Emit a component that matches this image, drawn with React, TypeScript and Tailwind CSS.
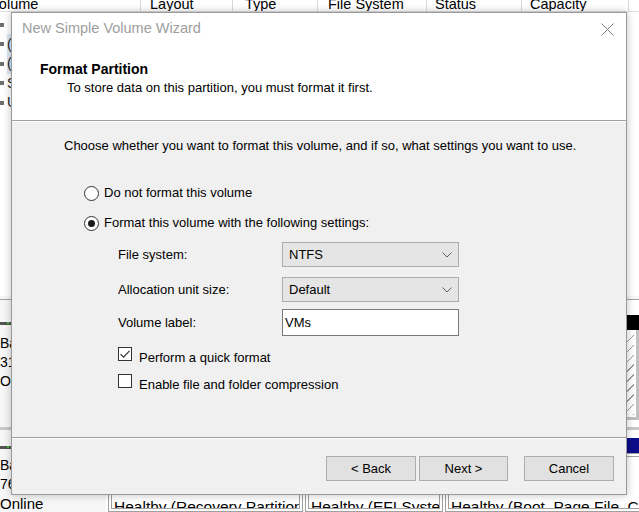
import React from 'react';

const columns = [
  { label: 'Volume', w: 'w-[141px]', pad: 'pl-0 -ml-[10px]' },
  { label: 'Layout', w: 'w-[92px]', pad: 'pl-[9px]' },
  { label: 'Type', w: 'w-[85px]', pad: 'pl-[12px]' },
  { label: 'File System', w: 'w-[109px]', pad: 'pl-[10px]' },
  { label: 'Status', w: 'w-[95px]', pad: 'pl-[8px]' },
  { label: 'Capacity', w: 'w-[107px]', pad: 'pl-[8px]' },
];

const volumes = [
  { name: '', tint: false },
  { name: '(C:)', tint: true },
  { name: '(E:)', tint: true },
  { name: 'System Reserved', tint: false },
  { name: 'USB (F:)', tint: false },
];

const Radio: React.FC<{ checked?: boolean; label: string }> = ({ checked, label }) => (
  <div className="flex items-center h-[18px]">
    <span className="w-[15px] h-[15px] rounded-full border border-[#333] bg-white flex items-center justify-center">
      {checked && <span className="w-[7px] h-[7px] rounded-full bg-[#1a1a1a]" />}
    </span>
    <span className="ml-[5px]">{label}</span>
  </div>
);

const Checkbox: React.FC<{ checked?: boolean; label: string }> = ({ checked, label }) => (
  <div className="flex items-center h-[18px]">
    <span className="w-[14px] h-[14px] border border-[#333] bg-white flex items-center justify-center">
      {checked && (
        <svg width="12" height="12" viewBox="0 0 12 12">
          <path d="M1.5 6.2 L4.5 9.2 L10.5 2.8" fill="none" stroke="#333" strokeWidth="1.2" />
        </svg>
      )}
    </span>
    <span className="ml-[7px] mt-[7px]">{label}</span>
  </div>
);

const Chevron = () => (
  <svg width="10" height="6" viewBox="0 0 10 6">
    <path d="M0.5 0.5 L5 5 L9.5 0.5" fill="none" stroke="#606060" strokeWidth="1" />
  </svg>
);

const Select: React.FC<{ value: string }> = ({ value }) => (
  <div className="w-[177px] h-[25px] bg-[#e5e5e5] border border-[#adadad] flex items-center justify-between pl-[6px] pr-[6px]">
    <span>{value}</span>
    <Chevron />
  </div>
);

const FormRow: React.FC<{ label: string; children: React.ReactNode; className?: string }> = ({ label, children, className }) => (
  <div className={`flex items-center ${className ?? ''}`}>
    <span className="w-[164px]">{label}</span>
    {children}
  </div>
);

const Button: React.FC<{ label: string; className?: string }> = ({ label, className }) => (
  <button className={`h-[25px] bg-[#e1e1e1] border border-[#adadad] text-[13px] text-black ${className ?? ''}`}>
    {label}
  </button>
);

const DiskIcon = () => (
  <div className="w-[11px] h-[3px] bg-[#555] flex justify-end pr-[2px]">
    <span className="w-[2px] h-[2px] bg-[#3cc23c]" />
  </div>
);

const Partition: React.FC<{ label: string; className: string }> = ({ label, className }) => (
  <div className={`flex flex-col ${className}`}>
    <div className="h-[15px] shrink-0 bg-[#0c0c8a]" />
    <div className="flex-1 min-h-0 border border-[#a0a0a0] p-[2px] bg-white">
      <div className="h-full border border-[#a0a0a0] bg-white pl-[2px] pt-[41px] text-[15.5px] leading-[18px] whitespace-nowrap overflow-hidden">
        {label}
      </div>
    </div>
  </div>
);

export default function App() {
  return (
    <div className="relative w-[639px] h-[512px] overflow-hidden bg-white font-['Liberation_Sans',Arial,sans-serif] text-black">
      {/* column header of the volume list */}
      <div className="flex h-[12px] border-b border-[#e0e0e0] overflow-hidden text-[14.5px] leading-[14px]">
        {columns.map((c) => (
          <div key={c.label} className={`${c.w} shrink-0 border-r border-[#d8d8d8] overflow-hidden`}>
            <div className={`-mt-[3px] whitespace-nowrap ${c.pad}`}>{c.label}</div>
          </div>
        ))}
        <div className="flex-1" />
      </div>

      {/* volume list */}
      <div className="h-[284px] pt-[3px]">
        {volumes.map((v, i) => (
          <div key={i} className="h-[19.5px] flex items-center text-[14px]">
            <span className="w-[4px] h-[4px] bg-[#6e6e6e]" />
            <span className={`ml-[3px] whitespace-nowrap text-[#1b1b1b] ${v.tint ? 'bg-[#dce9f5]' : ''}`}>{v.name}</span>
          </div>
        ))}
      </div>

      <div className="h-[4px] border-b border-[#a0a0a0] bg-[#f7f7f7]" />

      {/* disk 0 */}
      <div className="flex h-[130px] border-b-[3px] border-[#c8c8c8] text-[14px]">
        <div className="w-[106px] shrink-0 bg-[#f7f7f7] pt-[22px]">
          <DiskIcon />
          <div className="pt-[9px] leading-[19px] whitespace-nowrap">
            <div>Basic</div>
            <div>31.98 GB</div>
            <div>Online</div>
          </div>
        </div>
        <div className="flex-1 ml-[2px] pt-[15px] pb-[7px] flex flex-col">
          <div className="h-[15px] shrink-0 bg-black" />
          <div className="flex-1 border-x-[3px] border-b-[3px] border-[#c0c0c0] p-[2px] bg-white">
            <div className="h-full bg-[repeating-linear-gradient(135deg,#ffffff_0px,#ffffff_6px,#9a9a9a_6px,#9a9a9a_7px)]" />
          </div>
        </div>
      </div>

      {/* disk 1 */}
      <div className="flex h-[82px] overflow-hidden text-[14px]">
        <div className="w-[106px] shrink-0 bg-[#f7f7f7] pt-[16px]">
          <DiskIcon />
          <div className="pt-[7px] leading-[19px] whitespace-nowrap">
            <div>Basic</div>
            <div>76.69 GB</div>
            <div className="text-[15px]">Online</div>
          </div>
        </div>
        <div className="flex-1 flex gap-[2px] ml-[2px] pt-[8px]">
          <Partition label="Healthy (Recovery Partition)" className="w-[195px]" />
          <Partition label="Healthy (EFI System Partition)" className="w-[138px]" />
          <Partition label="Healthy (Boot, Page File, Crash Dump, Primary Partition)" className="flex-1" />
        </div>
      </div>

      {/* wizard dialog, lying over the console */}
      <div className="absolute left-[11px] top-[12px] w-[616px] h-[483px] border border-[#9a9a9a] bg-[#f0f0f0] flex flex-col text-[13px] shadow-[0_0_8px_rgba(0,0,0,0.25)]">
        <div className="h-[107px] bg-white">
          <div className="h-[32px] flex items-center justify-between pl-[10px] pr-[12px]">
            <span className="text-[14.5px] text-[#9e9e9e]">New Simple Volume Wizard</span>
            <svg width="13" height="13" viewBox="0 0 13 13">
              <path d="M0.5 0.5 L12.5 12.5 M12.5 0.5 L0.5 12.5" stroke="#808080" strokeWidth="1" />
            </svg>
          </div>
          <div className="pt-[15px] pl-[28px] leading-[18px]">
            <div className="font-bold text-[14px]">Format Partition</div>
            <div className="mt-[1px] pl-[27px]">To store data on this partition, you must format it first.</div>
          </div>
        </div>
        <div className="h-[2px] border-t border-[#a0a0a0] border-b border-b-white" />

        <div className="flex-1 pl-[52px] pt-[15px] leading-[18px]">
          <div>Choose whether you want to format this volume, and if so, what settings you want to use.</div>
          <div className="ml-[20px] mt-[29px]">
            <Radio label="Do not format this volume" />
            <div className="mt-[12px]">
              <Radio checked label="Format this volume with the following settings:" />
            </div>
          </div>
          <div className="ml-[54px]">
            <FormRow label="File system:" className="mt-[10px]">
              <Select value="NTFS" />
            </FormRow>
            <FormRow label="Allocation unit size:" className="mt-[10px]">
              <Select value="Default" />
            </FormRow>
            <FormRow label="Volume label:" className="mt-[7px]">
              <div className="w-[177px] h-[27px] bg-white border border-[#7a7a7a] flex items-center pl-[2px]">VMs</div>
            </FormRow>
            <div className="mt-[9px]">
              <Checkbox checked label="Perform a quick format" />
            </div>
            <div className="mt-[9px]">
              <Checkbox label="Enable file and folder compression" />
            </div>
          </div>
        </div>

        <div className="h-[2px] border-t border-[#a0a0a0] border-b border-b-white" />
        <div className="h-[55px] flex justify-end items-start pt-[17px] pr-[12px]">
          <Button label="< Back" className="w-[90px]" />
          <Button label="Next >" className="w-[89px] ml-[3px]" />
          <Button label="Cancel" className="w-[90px] ml-[16px]" />
        </div>
      </div>
    </div>
  );
}
